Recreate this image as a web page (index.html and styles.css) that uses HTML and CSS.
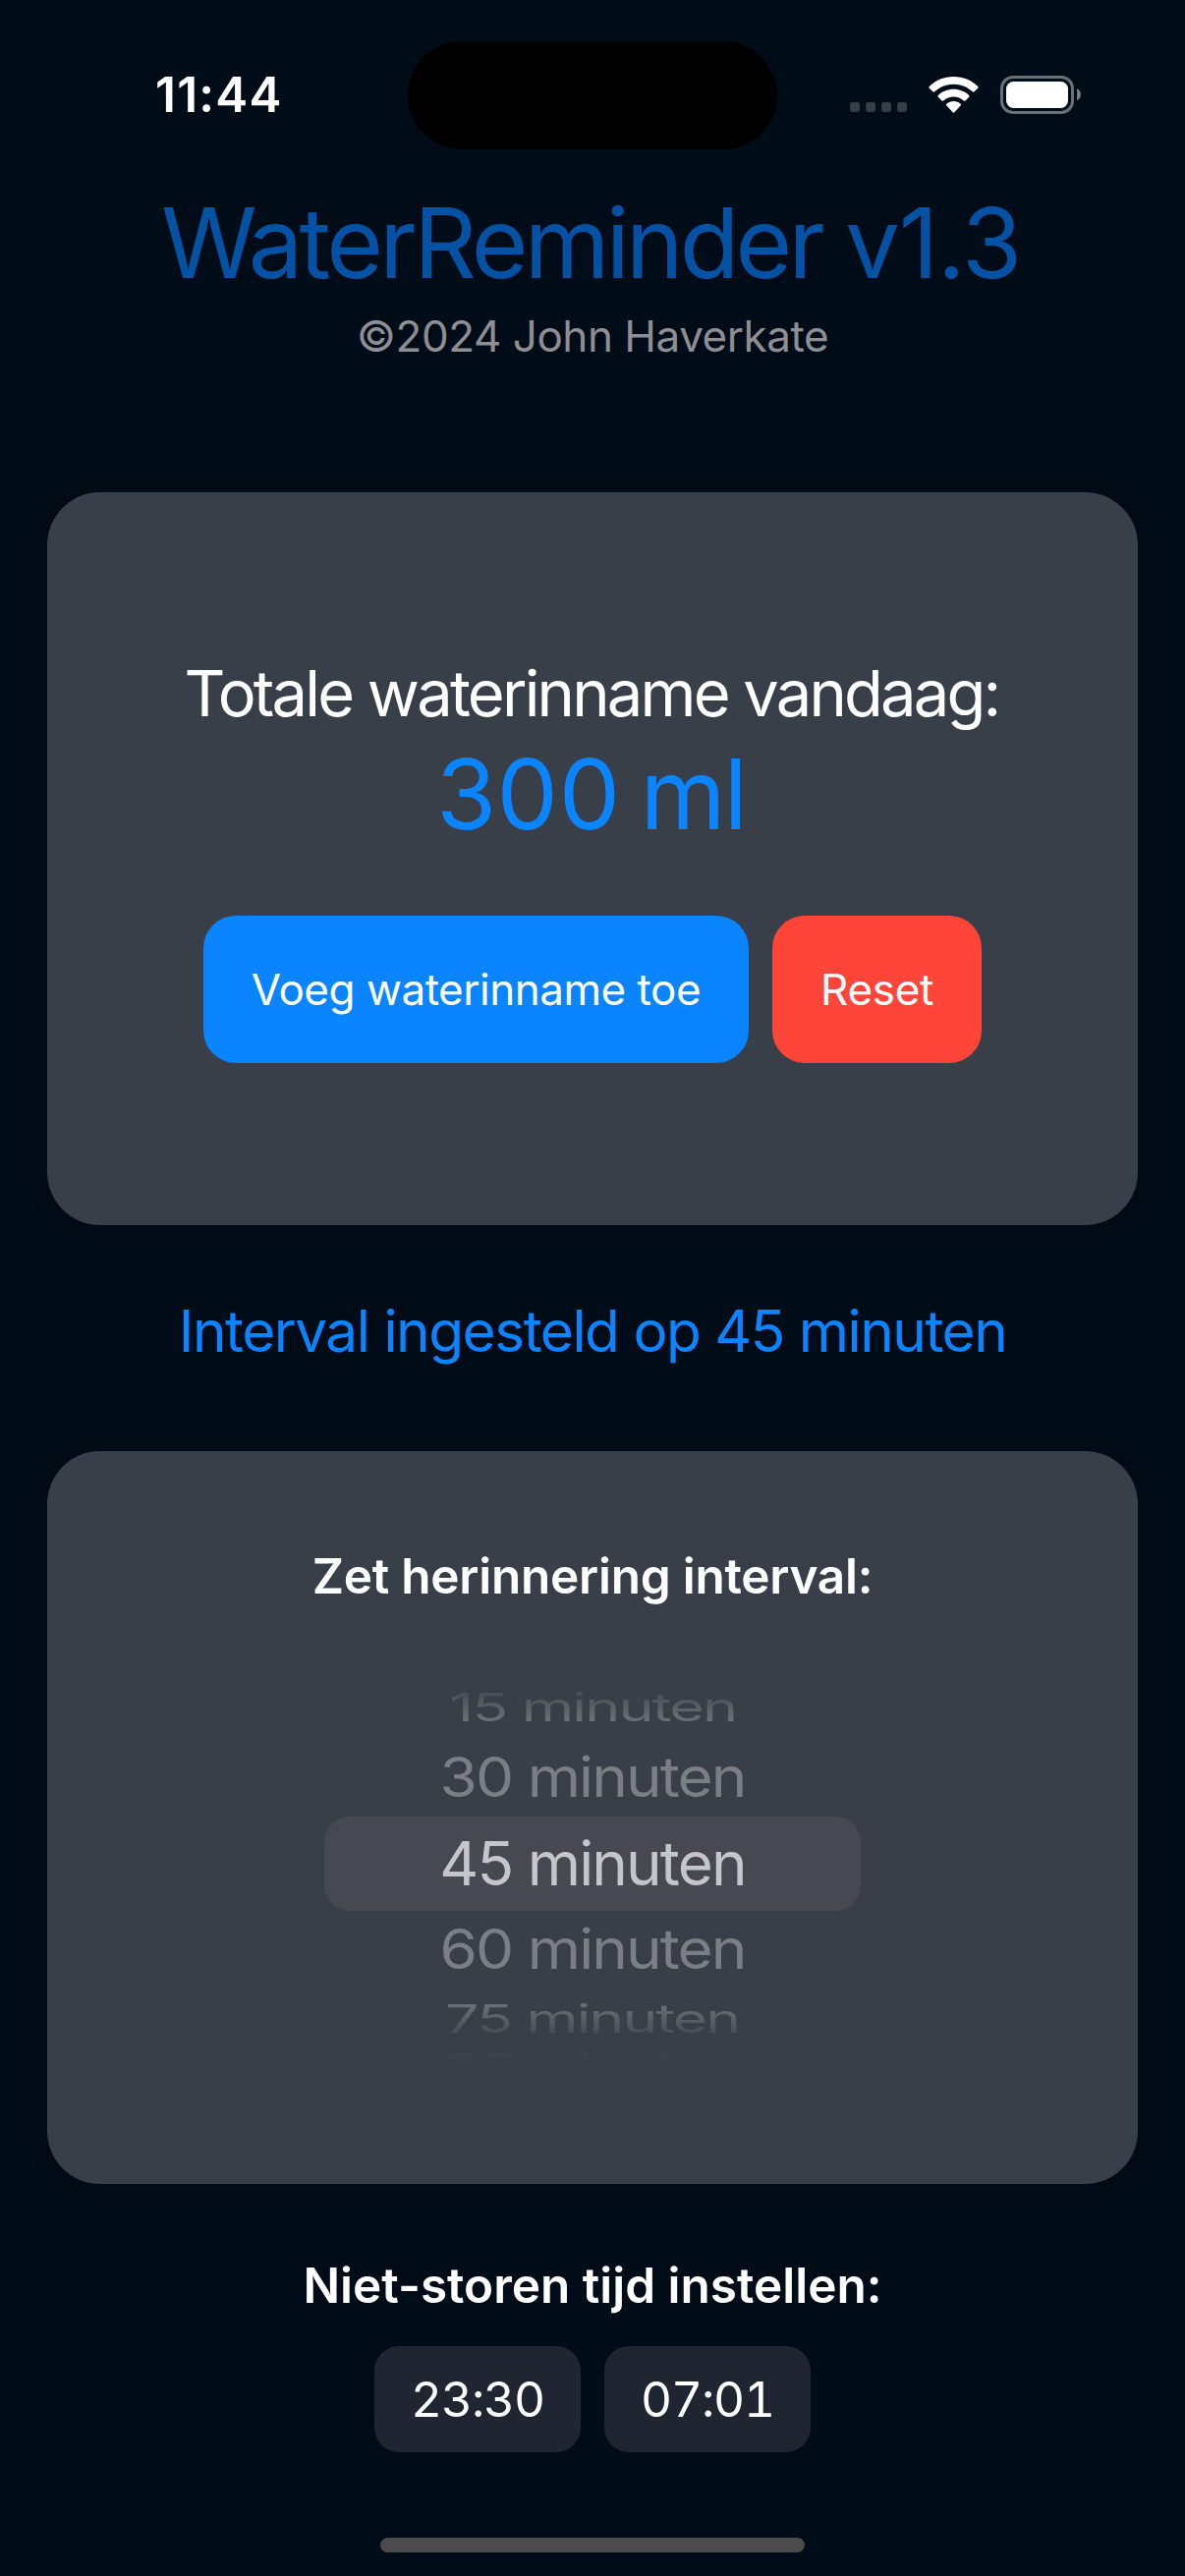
FILE: index.html
```html
<!DOCTYPE html>
<html lang="nl">
<head>
<meta charset="utf-8">
<meta name="viewport" content="width=device-width">
<title>WaterReminder</title>
<link rel="stylesheet" href="styles.css">
</head>
<body>
<header class="status-bar">
  <time class="clock">11:44</time>
  <div class="island"></div>
  <div class="indicators">
    <svg class="signal" viewBox="0 0 58 10" aria-hidden="true">
      <rect x="0" width="10" height="10" rx="3"/>
      <rect x="16" width="10" height="10" rx="3"/>
      <rect x="32" width="10" height="10" rx="3"/>
      <rect x="48" width="10" height="10" rx="3"/>
    </svg>
    <svg class="wifi" viewBox="0 0 51 37" aria-hidden="true">
      <path d="M25.5 0C35 0 43.800 3.700 50.200 9.900Q51.100 10.800 50.200 11.700L46.600 15.300Q45.700 16.200 44.800 15.300C39.700 10.500 32.900 7.700 25.500 7.700S11.300 10.500 6.200 15.300Q5.300 16.200 4.400 15.300L.8 11.700Q-.1 10.800.8 9.900C7.200 3.700 16 0 25.500 0Z"/>
      <path d="M25.500 12.800C31.500 12.800 37 15.100 41.200 18.900Q42.100 19.800 41.200 20.700L37.500 24.400Q36.600 25.200 35.700 24.400C32.900 22 29.400 20.500 25.500 20.500S18.100 22 15.300 24.400Q14.400 25.200 13.500 24.400L9.800 20.700Q8.900 19.800 9.800 18.900C14 15.100 19.500 12.800 25.500 12.800Z"/>
      <path d="M25.500 25.100C28.200 25.100 30.600 26 32.500 27.600Q33.500 28.500 32.600 29.500L26.400 36.300Q25.500 37.200 24.600 36.300L18.400 29.500Q17.500 28.500 18.500 27.600C20.400 26 22.800 25.100 25.500 25.100Z"/>
    </svg>
    <svg class="battery" viewBox="0 0 82 39" aria-hidden="true">
      <rect class="battery-shell" x="1.500" y="1.500" width="72" height="36" rx="11.500"/>
      <rect class="battery-level" x="6" y="6" width="63" height="27" rx="7.500"/>
      <path class="battery-tip" d="M78 13.300C80.400 14.300 82 16.600 82 19.300S80.400 24.300 78 25.300Z"/>
    </svg>
  </div>
</header>

<main class="screen">
  <h1 class="title">WaterReminder <span class="version">v1.3</span></h1>
  <p class="copyright">©2024 John Haverkate</p>

  <section class="card intake">
    <p class="intake-label">Totale waterinname vandaag:</p>
    <p class="intake-amount"><span class="amount-value">300</span> ml</p>
    <div class="actions">
      <button class="btn btn-add">Voeg waterinname toe</button>
      <button class="btn btn-reset">Reset</button>
    </div>
  </section>

  <p class="interval-status">Interval ingesteld op 45 minuten</p>

  <section class="card interval">
    <h2 class="heading">Zet herinnering interval:</h2>
    <div class="wheel">
      <div class="option far-above"><span>15 minuten</span></div>
      <div class="option above"><span>30 minuten</span></div>
      <div class="option selected"><span>45 minuten</span></div>
      <div class="option below"><span>60 minuten</span></div>
      <div class="option far-below"><span>75 minuten</span></div>
      <div class="option edge"><span>90 minuten</span></div>
    </div>
  </section>

  <h2 class="heading quiet-heading">Niet-storen tijd instellen:</h2>
  <div class="times">
    <button class="time">23:30</button>
    <button class="time">07:01</button>
  </div>
</main>
<div class="home-indicator"></div>
</body>
</html>
```
FILE: styles.css
```css
* { box-sizing: border-box; margin: 0; padding: 0; }

body {
  width: 1206px;
  height: 2622px;
  overflow: hidden;
  background: #000c17;
  color: #fff;
  font-family: Inter, "Liberation Sans", sans-serif;
  font-weight: 400;
  white-space: nowrap;
}

button { border: 0; color: inherit; font: inherit; }

/* Status bar */
.status-bar {
  display: grid;
  grid-template-columns: 415px 376px 415px;
  align-items: center;
  height: 192px;
}
.clock {
  padding-left: 158px;
  font-size: 49.5px;
  font-weight: 600;
  line-height: 60px;
  letter-spacing: 1.2px;
}
.island {
  height: 110px;
  margin-top: 2px;
  border-radius: 55px;
  background: #000;
}
.indicators {
  display: flex;
  align-items: center;
  padding-left: 74px;
}
.signal { width: 58px; height: 10px; margin-top: 26px; fill: #363d47; }
.wifi { width: 51px; height: 37px; margin-left: 22px; fill: #fff; }
.battery { width: 82px; height: 39px; margin-left: 22px; }
.battery-shell { fill: none; stroke: #6a7077; stroke-width: 3; }
.battery-level { fill: #fff; }
.battery-tip { fill: #767b82; }

/* Page */
.screen {
  display: flex;
  flex-direction: column;
  align-items: center;
}
.title {
  padding-right: 3px;
  color: #0552a5;
  font-size: 99px;
  font-weight: 400;
  line-height: 110px;
  letter-spacing: -3.75px;
}
.version { letter-spacing: -1px; }
.copyright {
  margin-top: 10px;
  color: #8e8e93;
  font-size: 44px;
  line-height: 60px;
  letter-spacing: -0.47px;
}

.card {
  display: flex;
  flex-direction: column;
  align-items: center;
  width: 1110px;
  height: 746px;
  border-radius: 54px;
  background: #393f49;
  box-shadow: 0 0 20px rgba(0, 0, 0, 0.18), inset 0 0 20px rgba(255, 255, 255, 0.01);
}

.intake { margin-top: 129px; padding-top: 165px; }
.intake-label { padding-right: 2px; font-size: 65px; line-height: 80px; letter-spacing: -2.79px; }
.intake-amount {
  margin-top: 7px;
  padding-right: 3px;
  color: #0a84ff;
  font-size: 99px;
  line-height: 110px;
  letter-spacing: -1.73px;
}
.amount-value { margin-right: -6px; letter-spacing: 0.6px; }
.actions { display: flex; gap: 24px; margin-top: 69px; }
.btn {
  height: 150px;
  padding: 0 49px;
  border-radius: 33px;
  font-size: 44px;
  letter-spacing: -0.49px;
}
.btn-add { background: #0a84ff; }
.btn-reset { background: #ff453a; letter-spacing: -0.3px; }

.interval-status {
  margin-top: 68px;
  color: #0a84ff;
  font-size: 58.5px;
  line-height: 80px;
  letter-spacing: -1.47px;
}

.interval { margin-top: 82px; padding-top: 97px; }
.heading {
  font-size: 49.5px;
  font-weight: 600;
  line-height: 60px;
  letter-spacing: -0.24px;
}

/* Interval wheel: rows flatten and fade away from the centre */
.wheel {
  width: 546px;
  margin-top: 72px;
  font-size: 62px;
  letter-spacing: -1.9px;
}
.option {
  display: flex;
  align-items: center;
  justify-content: center;
}
.option span { line-height: 80px; color: #7b7e84; }
.far-above { height: 63px; }
.far-above span {
  transform: scale(0.985, 0.645);
  color: transparent;
  background: linear-gradient(#484d56 20%, #696d74 72%);
  background-clip: text;
}
.above { height: 80px; }
.above span { transform: scaleY(0.905); }
.selected { height: 96px; border-radius: 26px; background: #464951; }
.selected span { color: #c5c5ca; }
.below { height: 76px; }
.below span { transform: translateY(1px) scaleY(0.905); }
.far-below { height: 67px; }
.far-below span {
  transform: scale(0.978, 0.645);
  color: transparent;
  background: linear-gradient(#696d74 25%, #484d56 78%);
  background-clip: text;
}
.edge { height: 10px; align-items: flex-start; }
.edge span {
  transform: scale(0.955, 0.35);
  transform-origin: top;
  margin-top: -4px;
  color: transparent;
  background: linear-gradient(#40464f 22%, #393f49 48%);
  background-clip: text;
}

.quiet-heading { margin-top: 73px; letter-spacing: 0; }
.times { display: flex; gap: 24px; margin-top: 32px; }
.time {
  width: 210px;
  height: 108px;
  border-radius: 25px;
  background: #1f2531;
  font-size: 49.5px;
  line-height: 62px;
  font-variant-numeric: tabular-nums;
  letter-spacing: -1.1px;
}

.home-indicator {
  width: 432px;
  height: 15px;
  margin: 87px auto 0;
  border-radius: 8px;
  background: #4b4b4b;
}
```
